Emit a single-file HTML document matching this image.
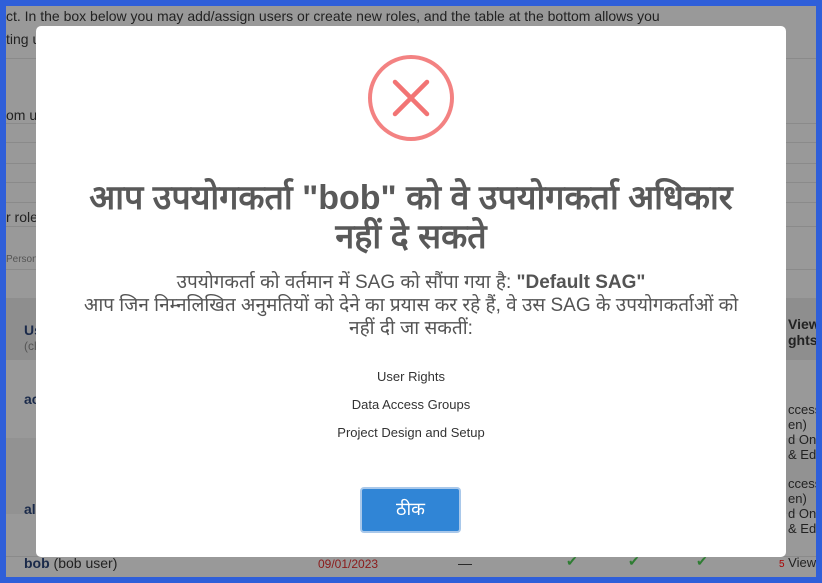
<!DOCTYPE html>
<html><head><meta charset="utf-8">
<style>
html,body{margin:0;padding:0}
body{width:822px;height:583px;overflow:hidden;position:relative;background:#2f5fd9;font-family:"Liberation Sans","Noto Sans CJK SC",sans-serif}
#bg{position:absolute;left:6px;top:6px;width:810px;height:571px;background:#999;overflow:hidden;color:#222}
.t{position:absolute;white-space:nowrap;font-size:14px}
.hl{position:absolute;left:0;width:810px;height:1px;background:#8a8a8a}
#modal{position:absolute;left:36px;top:26px;width:750px;height:531px;background:#fff;border-radius:5px;text-align:center;color:#545454}
h1{position:absolute;top:153px;left:0;width:750px;margin:0;font-size:34px;line-height:39px;font-weight:bold;color:#595959;font-family:"Liberation Sans","Noto Sans CJK SC",sans-serif}
.body{position:absolute;top:245px;left:0;width:750px;font-size:19px;line-height:23px}
.li{position:absolute;left:0;width:750px;font-size:13px;color:#333}
#btn{position:absolute;left:324px;top:461px;width:97px;height:42px;background:#3085d6;border:2px solid #a9c8ea;border-radius:4px;color:#fff;font-size:18px;line-height:40px}
</style></head><body>
<div id="bg">
<div class="t" style="left:0;top:2px">ct. In the box below you may add/assign users or create new roles, and the table at the bottom allows you</div>
<div class="t" style="left:0;top:25px">ting u</div>
<div class="hl" style="top:52px"></div>
<div class="t" style="left:0;top:101px">om us</div>
<div class="hl" style="top:117px"></div>
<div class="hl" style="top:136px"></div>
<div class="hl" style="top:157px"></div>
<div class="hl" style="top:176px"></div>
<div class="hl" style="top:196px"></div>
<div class="t" style="left:0;top:203px">r role</div>
<div class="hl" style="top:220px"></div>
<div class="t" style="left:0;top:248px;font-size:10px;color:#555">Person</div>
<div class="hl" style="top:263px"></div>
<div style="position:absolute;left:0;top:292px;width:810px;height:62px;background:#8e8e8e"></div>
<div class="t" style="left:18px;top:316px;font-weight:bold;color:#1a2a4a">Us</div>
<div class="t" style="left:18px;top:333px;font-size:12px;color:#555">(cl</div>
<div class="t" style="left:782px;top:310px;font-weight:bold">View</div>
<div class="t" style="left:782px;top:326px;font-weight:bold">ghts</div>
<div class="t" style="left:18px;top:385px;font-weight:bold;color:#1a2a4a">ac</div>
<div style="position:absolute;left:0;top:432px;width:810px;height:76px;background:#929292"></div>
<div class="t" style="left:18px;top:495px;font-weight:bold;color:#1a2a4a">al</div>
<div class="t" style="left:782px;top:396px;font-size:13px">ccess<br>en)<br>d Only<br>&amp; Ed</div>
<div class="t" style="left:782px;top:470px;font-size:13px">ccess<br>en)<br>d Only<br>&amp; Ed</div>
<div class="hl" style="top:550px"></div>
<div class="t" style="left:18px;top:549px"><b style="color:#1a2a4a">bob</b> (bob user)</div>
<div class="t" style="left:312px;top:551px;font-size:12px;color:#8b1a1a">09/01/2023</div>
<div class="t" style="left:452px;top:549px">—</div>
<div class="t" style="left:560px;top:547px;color:#2e7d32">✔</div>
<div class="t" style="left:622px;top:547px;color:#2e7d32">✔</div>
<div class="t" style="left:690px;top:547px;color:#2e7d32">✔</div>
<div class="t" style="left:773px;top:549px;font-size:13px"><span style="color:#a00;font-size:10px">5</span> View &amp; Ed</div>
</div>
<div id="modal">
<svg style="position:absolute;left:330px;top:27px" width="90" height="90" viewBox="0 0 90 90">
<circle cx="45" cy="45" r="41" fill="none" stroke="#f27474" stroke-width="4" opacity="0.9"/>
<path d="M29 29 L61 61 M61 29 L29 61" stroke="#f27474" stroke-width="4.5" stroke-linecap="round"/>
</svg>
<h1>आप उपयोगकर्ता "bob" को वे उपयोगकर्ता अधिकार<br>नहीं दे सकते</h1>
<div class="body">उपयोगकर्ता को वर्तमान में SAG को सौंपा गया है: <b>"Default SAG"</b><br>आप जिन निम्नलिखित अनुमतियों को देने का प्रयास कर रहे हैं, वे उस SAG के उपयोगकर्ताओं को<br>नहीं दी जा सकतीं:</div>
<div class="li" style="top:343px">User Rights</div>
<div class="li" style="top:371px">Data Access Groups</div>
<div class="li" style="top:399px">Project Design and Setup</div>
<div id="btn">ठीक</div>
</div>
</body></html>
